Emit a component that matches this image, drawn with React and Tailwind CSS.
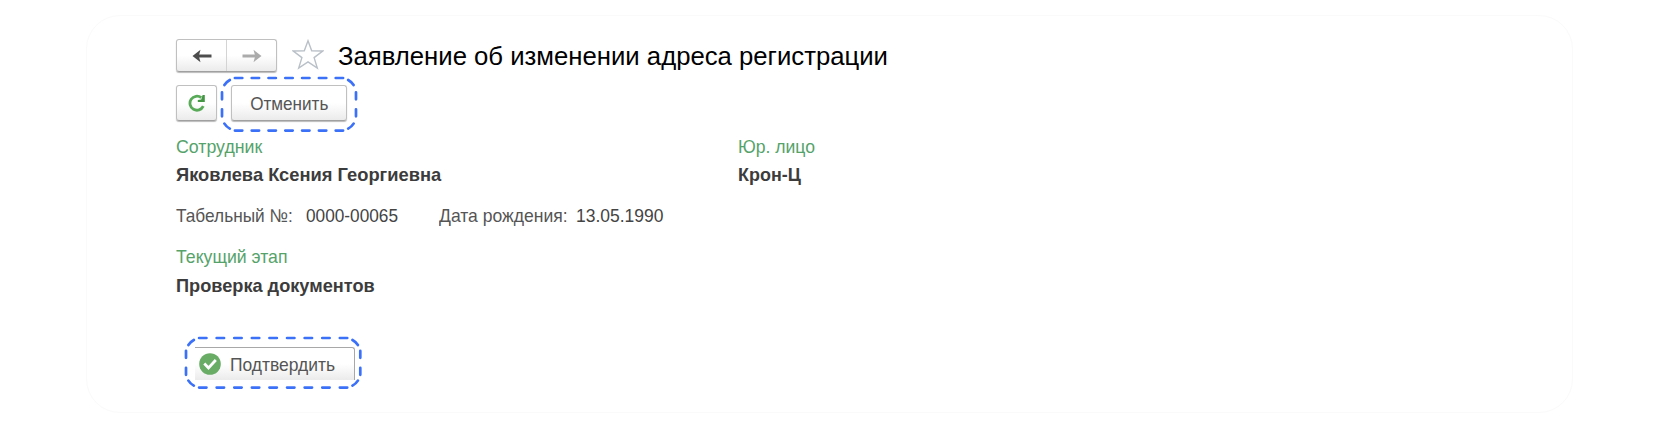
import React from "react";

const buttonClass =
  "flex items-center justify-center rounded-[3px] border border-[#c0c0c0] border-b-[#a0a0a0] bg-linear-to-b from-white from-50% to-[#ebebeb] shadow-[0_1px_1px_#bbbbbb]";

function Fit({ children, className }) {
  return <span className={"block w-max whitespace-nowrap " + className}>{children}</span>;
}

function Arrow({ className }) {
  return (
    <svg width="20" height="14" viewBox="0 0 20 14" className={className} fill="none" stroke="currentColor">
      <path d="M5 7H19.5" strokeWidth="3" />
      <path d="M0.5 7L8.5 0.8L6.8 7L8.5 13.2Z" fill="currentColor" stroke="none" />
    </svg>
  );
}

/* Rounded dashed frame: evenly spaced dashes on each side and one dash per corner. */
function Highlight({ width: w, height: h, count, step, className }) {
  const start = (w - step * (count - 1)) / 2;
  const across = Array.from({ length: count }, (_, i) => start + i * step)
    .map((x) => `M${x - 3.7} 0h7.4M${x - 3.7} ${h}h7.4`)
    .join("");
  const sides = [h / 2 - 8.5, h / 2 + 8.5]
    .map((y) => `M0 ${y - 3.5}v7M${w} ${y - 3.5}v7`)
    .join("");
  const corners =
    `M${w - 7.8} 2Q${w - 4.4} 3.8 ${w - 2.4} 7` +
    `M7.8 2Q4.4 3.8 2.4 7` +
    `M${w - 7.8} ${h - 2}Q${w - 4.4} ${h - 3.8} ${w - 2.4} ${h - 7}` +
    `M7.8 ${h - 2}Q4.4 ${h - 3.8} 2.4 ${h - 7}`;
  return (
    <svg width={w + 4} height={h + 4} viewBox={`-2 -2 ${w + 4} ${h + 4}`} className={"pointer-events-none absolute max-w-none " + className}>
      <path d={across + sides + corners} fill="none" stroke="#3b70f8" strokeWidth="2.7" strokeLinecap="round" />
    </svg>
  );
}

export default function App() {
  return (
    <div className="h-[428px] w-full bg-white pt-[15px] pl-[86px] font-['Liberation_Sans',Arial,sans-serif] text-[18.5px] text-[#555555]">
      <main className="flex h-[398px] w-[1487px] flex-col rounded-[34px] border border-[#fafafa] pt-[23px] pl-[89px]">
        <header className="flex h-[34px] items-start">
          <div className={buttonClass + " h-[33px] w-[101px]"}>
            <button className="flex h-full flex-1 items-center justify-center border-r border-[#d4d4d4]" aria-label="Назад">
              <Arrow className="text-[#4d4d4d]" />
            </button>
            <button className="flex h-full flex-1 items-center justify-center" aria-label="Вперёд">
              <Arrow className="-scale-x-100 text-[#ababab]" />
            </button>
          </div>
          <svg width="32" height="31" viewBox="0 0 32 31" className="ml-[15px]" fill="white" stroke="#b9c0c8" strokeWidth="1.4">
            <path d="M16 1.8L19.7 11.8L30.7 12L22.1 18.6L25.3 29L16 22.8L6.7 29L9.9 18.6L1.3 12L12.3 11.8Z" />
          </svg>
          <h1 className="ml-[14px] text-[25px] leading-[34px] text-black">
            <Fit className="origin-left scale-x-[1.028]">Заявление об изменении адреса регистрации</Fit>
          </h1>
        </header>

        <div className="mt-3 flex gap-[14px]">
          <button className={buttonClass + " h-9 w-[41px]"} aria-label="Обновить">
            <svg width="18" height="18" viewBox="0 0 18 18" fill="none">
              <path d="M15.3 12.2A7 7 0 1 1 13.3 3.7" stroke="#58aa58" strokeWidth="2.8" />
              <path d="M16.8 1V8H9.8V6L13.2 5.6L14.6 1Z" fill="#459745" />
            </svg>
          </button>
          <div className="relative">
            <button className={buttonClass + " h-9 w-[116px] pt-[2px]"}>
              <Fit className="origin-center scale-x-[0.925]">Отменить</Fit>
            </button>
            <Highlight width={134} height={52.6} count={7} step={16.8} className="-top-[9.3px] -left-[11.3px]" />
          </div>
        </div>

        <section className="mt-[12px] flex">
          <div className="w-[562px]">
            <div className="leading-[28px] text-[#55a36a]"><Fit className="origin-left scale-x-[0.96]">Сотрудник</Fit></div>
            <div className="font-bold leading-[28px] text-[#3c3c3c]"><Fit className="origin-left scale-x-[0.99]">Яковлева Ксения Георгиевна</Fit></div>
          </div>
          <div>
            <div className="leading-[28px] text-[#55a36a]"><Fit className="origin-left scale-x-[0.95]">Юр. лицо</Fit></div>
            <div className="font-bold leading-[28px] text-[#3c3c3c]"><Fit className="origin-left scale-x-[0.97]">Крон-Ц</Fit></div>
          </div>
        </section>

        <section className="mt-[13px] flex leading-[28px]">
          <div className="w-[130px]"><Fit className="origin-left scale-x-[0.933]">Табельный №:</Fit></div>
          <div className="w-[133px] text-[#444444]"><Fit className="origin-left scale-x-[0.932]">0000-00065</Fit></div>
          <div className="w-[137px]"><Fit className="origin-left scale-x-[0.948]">Дата рождения:</Fit></div>
          <div className="text-[#444444]"><Fit className="origin-left scale-x-[0.945]">13.05.1990</Fit></div>
        </section>

        <section className="mt-[13px]">
          <div className="leading-[28px] text-[#55a36a]"><Fit className="origin-left scale-x-[0.955]">Текущий этап</Fit></div>
          <div className="font-bold leading-[29px] text-[#3c3c3c]"><Fit className="origin-left scale-x-[0.982]">Проверка документов</Fit></div>
        </section>

        <div className="relative mt-[47px] ml-[19px] w-max">
          <button className="flex h-[33px] w-[160px] items-center rounded-tr-[3px] border-t border-r border-[#a8a8a8] bg-linear-to-b from-white from-50% to-[#ebebeb] pl-[4px]">
            <svg width="22" height="22" viewBox="0 0 22 22" fill="none">
              <circle cx="11" cy="11" r="10.8" fill="#69ac66" />
              <path d="M5.3 10.5L9.5 15L16.8 7" stroke="white" strokeWidth="2.8" />
            </svg>
            <span className="ml-[9px] pt-[2px]"><Fit className="origin-left scale-x-[0.943]">Подтвердить</Fit></span>
          </button>
          <Highlight width={174.3} height={49.6} count={9} step={17.6} className="-top-[11.3px] -left-[11px]" />
        </div>
      </main>
    </div>
  );
}
